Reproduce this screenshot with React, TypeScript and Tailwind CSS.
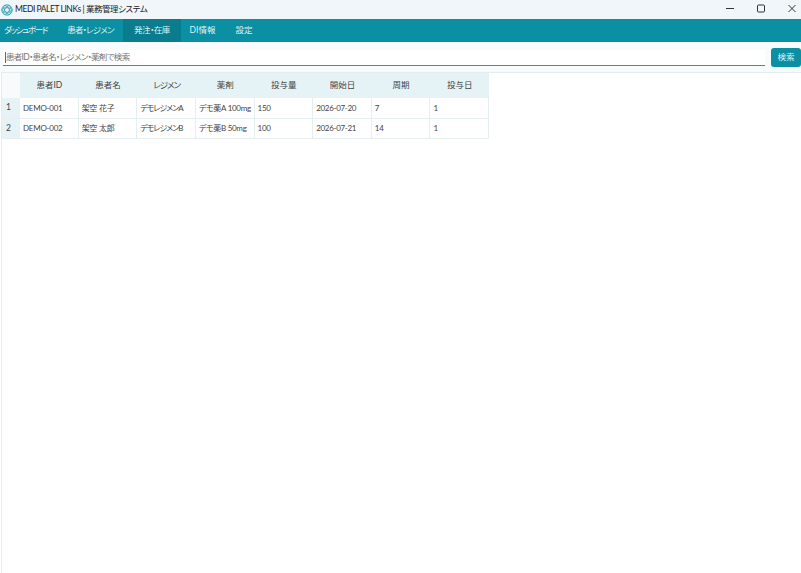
import React from "react";

const columns = [
  { t: "患者ID", c: "" },
  { t: "患者名", c: "" },
  { t: "レジメン", c: "tracking-[-1px]" },
  { t: "薬剤", c: "" },
  { t: "投与量", c: "" },
  { t: "開始日", c: "" },
  { t: "周期", c: "" },
  { t: "投与日", c: "" },
];
const rows = [
  ["DEMO-001", "架空 花子", "デモレジメンA", "デモ薬A 100mg", "150", "2026-07-20", "7", "1"],
  ["DEMO-002", "架空 太郎", "デモレジメンB", "デモ薬B 50mg", "100", "2026-07-21", "14", "1"],
];
const cellTrack = ["tracking-[-0.25px]", "tracking-[-0.25px]", "tracking-[-1px]", "tracking-[-0.3px]", "tracking-[-0.25px]", "tracking-[-0.3px]", "tracking-[-0.25px]", "tracking-[-0.25px]"];
const menus = [
  { t: "ダッシュボード", c: "w-[58px] pl-[4px] tracking-[-1.4px]" },
  { t: "患者・レジメン", c: "w-[65px] justify-center tracking-[-0.8px]" },
  { t: "発注・在庫", c: "w-[58px] justify-center tracking-[-0.5px] bg-[#097c8e]" },
  { t: "DI情報", c: "w-[43px] justify-center" },
  { t: "設定", c: "w-[40px] justify-center" },
];

function Logo() {
  return (
    <svg width="12" height="12" viewBox="0 0 24 24" fill="none" stroke="#2f9fb0" strokeWidth="1.6" className="ml-[1px]">
      <circle cx="12" cy="12" r="10.5" />
      <ellipse cx="12" cy="12" rx="10" ry="4.5" />
      <ellipse cx="12" cy="12" rx="10" ry="4.5" transform="rotate(60 12 12)" />
      <ellipse cx="12" cy="12" rx="10" ry="4.5" transform="rotate(120 12 12)" />
    </svg>
  );
}

export default function App() {
  return (
    <div className="w-[801px] h-[573px] overflow-hidden flex flex-col bg-white text-[#333] font-['Lato','Noto_Sans_CJK_JP',sans-serif] [font-feature-settings:'palt']">
      <div className="h-[19px] flex items-center bg-[#f0f6fa] shrink-0">
        <Logo />
        <span className="ml-[2px] text-[8.5px] tracking-[-0.45px] leading-none text-[#222] whitespace-nowrap">MEDI PALET LINKs | 業務管理システム</span>
        <div className="ml-auto flex items-center h-full pr-[5px] gap-[23px]">
          <svg width="8" height="19" viewBox="0 0 8 19" stroke="#333" fill="none">
            <path d="M0 8.5h8" />
          </svg>
          <svg width="8" height="19" viewBox="0 0 8 19" stroke="#333" fill="none">
            <rect x="0.5" y="5" width="7" height="7" rx="1" />
          </svg>
          <svg width="8" height="19" viewBox="0 0 8 19" stroke="#333" fill="none">
            <path d="M0.5 5l7 7M7.5 5l-7 7" />
          </svg>
        </div>
      </div>

      <div className="h-[23px] flex bg-[#0a8fa3] shrink-0">
        {menus.map((m) => (
          <div key={m.t} className={`flex items-center text-[8.5px] text-[#dff1f4] whitespace-nowrap ${m.c}`}>
            {m.t}
          </div>
        ))}
      </div>

      <div className="h-[30px] flex items-center pl-[3px] bg-[#f8fbfc] shrink-0">
        <div className="w-[762px] h-[16px] mt-[2px] bg-white border-b border-[#2f8fb5] flex items-center pl-[2px] text-[8.5px] tracking-[-0.7px] text-[#777]">
          <span className="border-l border-[#666] h-[11px] flex items-center whitespace-nowrap">患者ID・患者名・レジメン・薬剤で検索</span>
        </div>
        <button className="ml-[6px] w-[30px] h-[19px] rounded-[3px] bg-[#0a8fa3] text-[8.5px] text-[#dff1f4] flex items-center justify-center">
          検索
        </button>
      </div>

      <div className="flex-1 ml-[1px] border-l border-t border-[#e4ecef]">
        <div className="w-[487px] text-[8px] text-[#444]">
          <div className="flex h-[25px] bg-[#e6f3f6] text-[8.5px]">
            <div className="w-[18px] bg-[#f8fbfc]" />
            {columns.map((c) => (
              <div key={c.t} className={`w-[58.625px] flex items-center justify-center ${c.c}`}>{c.t}</div>
            ))}
          </div>
          {rows.map((r, i) => (
            <div key={i} className="flex h-[20.5px] border-b border-[#e6eef0]">
              <div className="w-[18px] bg-[#e6f3f6] flex items-center pl-[4px] text-[8.5px]">{i + 1}</div>
              {r.map((v, j) => (
                <div key={j} className={`w-[58.625px] flex items-center pl-[3px] border-r border-[#e6eef0] whitespace-nowrap overflow-hidden ${cellTrack[j]}`}>{v}</div>
              ))}
            </div>
          ))}
        </div>
      </div>
    </div>
  );
}
